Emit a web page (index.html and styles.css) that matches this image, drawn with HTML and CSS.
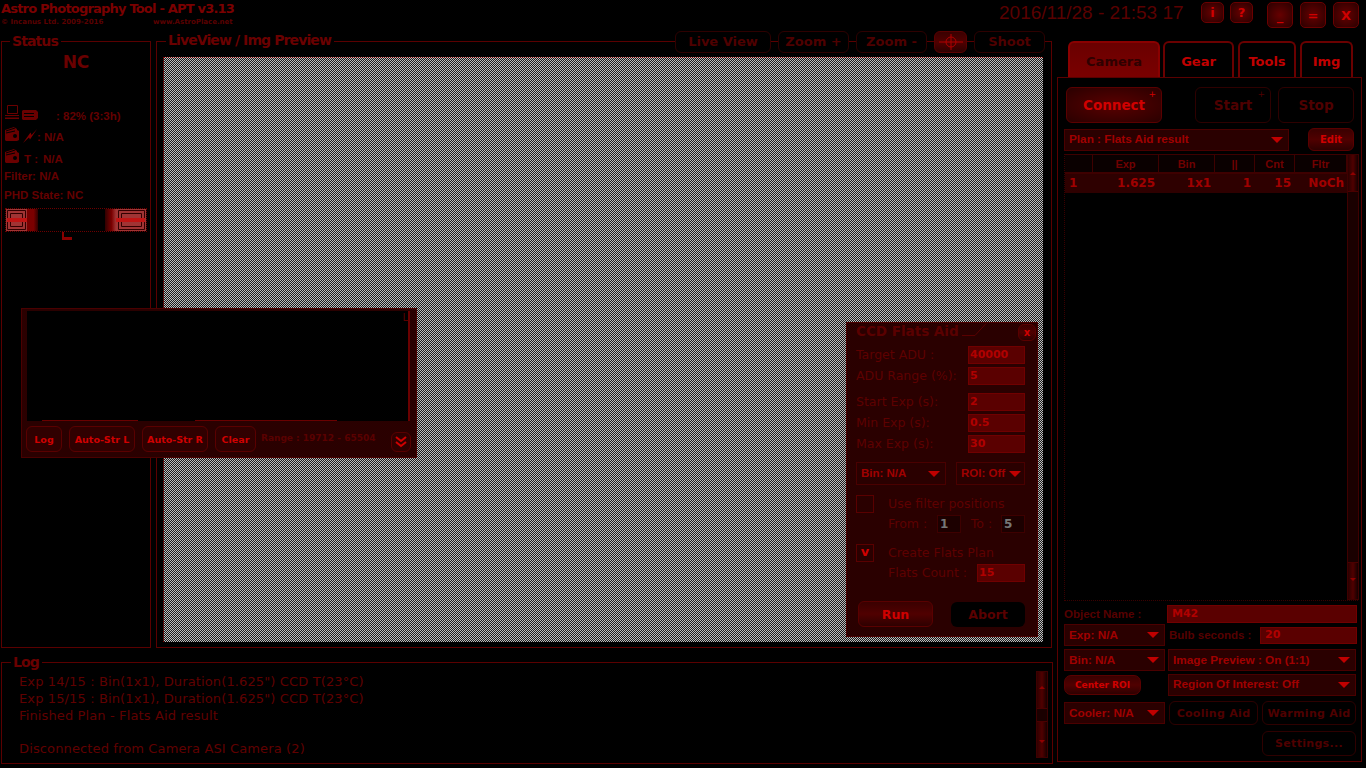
FILE: index.html
```html
<!DOCTYPE html>
<html lang="en">
<head>
<meta charset="utf-8">
<title>Astro Photography Tool</title>
<link rel="stylesheet" href="styles.css">
</head>
<body>
<div class="app">
  <header class="top">
    <div class="brand">
      <div class="brand-name">Astro Photography Tool - APT v3.13</div>
      <div class="brand-sub"><span class="brand-copy">© Incanus Ltd. 2009-2016</span><span>www.AstroPlace.net</span></div>
    </div>
    <div class="clock">2016/11/28 - 21:53 17</div>
    <button class="win-btn small">i</button>
    <button class="win-btn small">?</button>
    <button class="win-btn big first">_</button>
    <button class="win-btn big">=</button>
    <button class="win-btn big">X</button>
  </header>

  <div class="main">
    <div class="left">
      <div class="upper">
        <section class="panel status">
          <h2 class="panel-title">Status</h2>
          <div class="nc">NC</div>
          <div class="st-row r1">
            <svg class="ic" width="14" height="14" viewBox="0 0 14 14"><path d="M2.500 .5h10v8h-10z" fill="none" stroke="#6a0000"/><path d="M0 10h14v1H0zM0 12.500h14v1.500H0z" fill="#6a0000"/></svg>
            <svg class="ic batt" width="16" height="10" viewBox="0 0 16 10"><path d="M1 0h13l2 2v6l-2 2H1L0 9V1z" fill="#6a0000"/><path d="M2 3h10v1H2zM2 6h10v1H2z" fill="#000"/></svg>
            <span class="st-val batt-val">: 82% (3:3h)</span>
          </div>
          <div class="st-row r2">
            <svg class="ic" width="14" height="14" viewBox="0 0 14 14"><path d="M0 3l9-3 3 2v1l2 1v9l-2 1H1l-1-1z" fill="#6a0000"/><path d="M1 4l9-3M1 6l9-2" stroke="#000"/><circle cx="10" cy="9" r="2" fill="#000"/></svg>
            <svg class="ic bolt" width="14" height="14" viewBox="0 0 14 14"><path d="M14 0L8.500 6 7.500 3.500 0 14 6 8.500 7 10.500z" fill="#7a0000"/></svg>
            <span class="st-val">: N/A</span>
          </div>
          <div class="st-row r3">
            <svg class="ic" width="14" height="14" viewBox="0 0 14 14"><path d="M0 3l9-3 3 2v1l2 1v9l-2 1H1l-1-1z" fill="#6a0000"/><path d="M1 4l9-3M1 6l9-2" stroke="#000"/><circle cx="10" cy="9" r="2" fill="#000"/></svg>
            <span class="st-val t-lbl">T :</span>
            <span class="st-val t-val">N/A</span>
          </div>
          <div class="st-text filter">Filter: N/A</div>
          <div class="st-text phd">PHD State: NC</div>
          <div class="stretch">
            <svg class="knob" width="21" height="22" viewBox="0 0 21 22"><rect width="21" height="22" fill="#a03434"/><path d="M1.500 1.500h18v19h-18zM4.500 4.500h12v13h-12z" fill="none" stroke="#300"/><rect x="1" y="9" width="20" height="4" fill="#c01414"/></svg>
            <div class="fade-l"></div>
            <div class="stretch-gap"></div>
            <div class="fade-r"></div>
            <svg class="knob" width="30" height="22" viewBox="0 0 30 22"><rect width="30" height="22" fill="#a03434"/><path d="M2.500 1.500h26v19h-26zM5.500 4.500h20v13h-20z" fill="none" stroke="#300"/><rect x="0" y="9" width="29" height="4" fill="#c01414"/></svg>
          </div>
          <div class="stretch-mark"></div>
        </section>

        <section class="panel live">
          <div class="live-head">
            <h2 class="panel-title">LiveView / Img Preview</h2>
            <div class="live-tools">
              <button class="btn dim bold13 w96">Live View</button>
              <button class="btn dim bold13 w71">Zoom +</button>
              <button class="btn dim bold13 w71">Zoom -</button>
              <button class="btn lit w33"><svg width="24" height="16" viewBox="0 0 24 16"><circle cx="12" cy="8" r="5" fill="none" stroke="#b00000"/><path d="M0 8h24M12 0v16" stroke="#b00000"/></svg></button>
              <button class="btn dim bold13 w71">Shoot</button>
            </div>
          </div>
          <div class="preview">
            <svg class="preview-img" width="880" height="585" shape-rendering="crispEdges">
              <defs>
                <pattern id="chk" width="2" height="2" patternUnits="userSpaceOnUse">
                  <rect width="2" height="2" fill="#1c1c1c"/>
                  <rect width="1" height="1" fill="#bcbcbc"/>
                  <rect x="1" y="1" width="1" height="1" fill="#bcbcbc"/>
                </pattern>
              </defs>
              <rect width="880" height="585" fill="url(#chk)"/>
            </svg>
          </div>
        </section>
      </div>

      <section class="panel log">
        <h2 class="panel-title">Log</h2>
        <div class="log-body">
          <div class="log-lines">
            <div>Exp 14/15 : Bin(1x1), Duration(1.625") CCD T(23°C)</div>
            <div>Exp 15/15 : Bin(1x1), Duration(1.625") CCD T(23°C)</div>
            <div>Finished Plan - Flats Aid result</div>
            <div>&nbsp;</div>
            <div>Disconnected from Camera ASI Camera (2)</div>
          </div>
          <div class="log-scroll">
            <div class="log-sb up"></div>
            <div class="log-thumb"></div>
            <div class="log-sb down"></div>
          </div>
        </div>
      </section>
    </div>

    <aside class="right">
      <nav class="tabs">
        <div class="tab active w92">Camera</div>
        <div class="tab w71">Gear</div>
        <div class="tab w58">Tools</div>
        <div class="tab w53">Img</div>
      </nav>
      <div class="cam">
        <div class="cam-row acts">
          <button class="btn lit big-btn connect">Connect<span class="plus">+</span></button>
          <button class="btn dim big-btn start">Start<span class="plus">+</span></button>
          <button class="btn dim big-btn stop">Stop</button>
        </div>
        <div class="cam-row plan-row">
          <div class="drop plan">Plan : Flats Aid result</div>
          <button class="btn lit edit">Edit</button>
        </div>
        <div class="plan-table">
          <div class="pt-main">
            <div class="pt-grid pt-head"><span></span><span>Exp</span><span>Bin</span><span>||</span><span>Cnt</span><span>Fltr</span></div>
            <div class="pt-grid pt-line"><span class="idx">1</span><span>1.625</span><span>1x1</span><span>1</span><span>15</span><span>NoCh</span></div>
          </div>
          <div class="pt-scroll">
            <div class="pt-sb up"></div>
            <div class="pt-track"></div>
            <div class="pt-sb down"></div>
          </div>
        </div>
        <div class="cam-row obj-row">
          <span class="cam-lbl obj-lbl">Object Name :</span>
          <div class="input obj-in">M42</div>
        </div>
        <div class="cam-row exp-row">
          <div class="drop side">Exp: N/A</div>
          <span class="cam-lbl bulb-lbl">Bulb seconds :</span>
          <div class="input bulb-in">20</div>
        </div>
        <div class="cam-row bin-row">
          <div class="drop side">Bin: N/A</div>
          <div class="drop wide">Image Preview : On (1:1)</div>
        </div>
        <div class="cam-row roi-row">
          <button class="btn lit center-roi">Center ROI</button>
          <div class="drop wide region">Region Of Interest: Off</div>
        </div>
        <div class="cam-row cool-row">
          <div class="drop side">Cooler: N/A</div>
          <button class="btn dim aid cooling">Cooling Aid</button>
          <button class="btn dim aid warming">Warming Aid</button>
        </div>
        <div class="cam-row set-row">
          <button class="btn dim aid settings">Settings...</button>
        </div>
      </div>
    </aside>
  </div>

  <div class="float histo">
    <div class="histo-view">
      <span class="histo-l">L</span>
      <span class="histo-bar b1"></span>
      <span class="histo-bar b2"></span>
    </div>
    <div class="histo-tools">
      <button class="btn lit hb w36">Log</button>
      <button class="btn lit hb w66">Auto-Str L</button>
      <button class="btn lit hb w66">Auto-Str R</button>
      <button class="btn lit hb w41">Clear</button>
      <span class="range">Range : 19712 - 65504</span>
      <button class="btn lit chev"><svg width="12" height="12" viewBox="0 0 12 12"><path d="M1 1l5 4 5-4M1 6l5 4 5-4" fill="none" stroke="#d00000" stroke-width="2"/></svg></button>
    </div>
  </div>

  <div class="float flats">
    <div class="fl-title">
      <span class="fl-name">CCD Flats Aid</span>
      <svg class="fl-slash" width="25" height="13" viewBox="0 0 25 13"><path d="M0 12.500h13L24 .5" fill="none" stroke="#5a0000"/></svg>
      <button class="btn lit fl-x">x</button>
    </div>
    <div class="fl-row"><span class="fl-lbl">Target ADU :</span><div class="input fl-in">40000</div></div>
    <div class="fl-row gap8"><span class="fl-lbl">ADU Range (%):</span><div class="input fl-in">5</div></div>
    <div class="fl-row"><span class="fl-lbl">Start Exp (s):</span><div class="input fl-in">2</div></div>
    <div class="fl-row"><span class="fl-lbl">Min Exp (s):</span><div class="input fl-in">0.5</div></div>
    <div class="fl-row gap9"><span class="fl-lbl">Max Exp (s):</span><div class="input fl-in">30</div></div>
    <div class="fl-drops">
      <div class="drop fl-bin">Bin: N/A</div>
      <div class="drop fl-roi">ROI: Off</div>
    </div>
    <div class="fl-check"><span class="box"></span><span class="fl-lbl">Use filter positions</span></div>
    <div class="fl-sub range-row">
      <span class="fl-lbl from-lbl">From :</span><div class="mini one">1</div>
      <span class="fl-lbl to-lbl">To :</span><div class="mini">5</div>
    </div>
    <div class="fl-check plan-check"><span class="box on">v</span><span class="fl-lbl">Create Flats Plan</span></div>
    <div class="fl-sub count-row"><span class="fl-lbl">Flats Count :</span><div class="input fl-count">15</div></div>
    <div class="fl-actions">
      <button class="btn lit run">Run</button>
      <button class="btn abort">Abort</button>
    </div>
  </div>
</div>
</body>
</html>
```
FILE: styles.css
```css
* { box-sizing: border-box; }
html, body { margin: 0; padding: 0; background: #000; }
body { width: 1366px; height: 768px; overflow: hidden; font-family: "DejaVu Sans", sans-serif; color: #6a0000; }
h2 { margin: 0; }
.app { position: relative; width: 1366px; height: 768px; display: flex; flex-direction: column; }

/* header */
.top { height: 41px; display: flex; align-items: flex-start; padding-left: 1px; }
.brand { width: 998px; padding-top: 1px; }
.brand-name { font: bold 13px/15px "DejaVu Sans", sans-serif; letter-spacing: -.8px; color: #7a0000; white-space: nowrap; }
.brand-sub { font: bold 7px/10px "DejaVu Sans", sans-serif; color: #5a0000; white-space: nowrap; display: flex; margin-top: 1px; }
.brand-copy { width: 152px; }
.clock { font: 19px/24px "Liberation Sans", sans-serif; color: #5a0000; width: 186px; margin: 0 16px 0 0; padding-top: 1px; white-space: nowrap; }
.win-btn { border: 1px solid #6a0000; border-radius: 5px; color: #d00000; font: bold 13px "DejaVu Sans", sans-serif; padding: 0; background: radial-gradient(ellipse at center, #660000, #2a0000); margin-top: 2px; }
.win-btn.small { width: 23px; height: 21px; margin-right: 6px; }
.win-btn.big { width: 26px; height: 26px; margin-right: 7px; }
.win-btn.first { margin-left: 8px; }

/* layout */
.main { display: flex; flex: 1; min-height: 0; }
.left { width: 1052px; margin-left: 1px; margin-right: 4px; display: flex; flex-direction: column; flex: none; }
.upper { display: flex; gap: 5px; height: 607px; }
.panel { border: 1px solid #5a0000; }
.panel-title { font: bold 14px/18px "DejaVu Sans", sans-serif; letter-spacing: -.9px; color: #6a0000; background: #000; width: fit-content; padding: 0 3px 0 2px; margin: -10px 0 0 5px; white-space: nowrap; }

/* status */
.status { width: 150px; padding-left: 3px; font: bold 11.500px/16px "Liberation Sans", sans-serif; color: #640000; }
.nc { font: bold 17px/20px "DejaVu Sans", sans-serif; color: #6a0000; text-align: center; margin: 2px 0 0 -3px; }
.st-row { display: flex; align-items: center; height: 14px; }
.r1 { margin-top: 33px; }
.r2, .r3 { margin-top: 8px; }
.ic { flex: none; }
.batt { margin: 5px 0 0 3px; }
.bolt { margin: 3px 0 0 4px; }
.st-val { white-space: nowrap; font: bold 11.500px/16px "Liberation Sans", sans-serif; }
.batt-val { margin: 7px 0 0 18px; }
.r2 .st-val, .r3 .st-val { margin-top: 5px; }
.t-lbl { margin-left: 5px; }
.t-val { margin-left: 5px; }
.st-text { white-space: nowrap; margin-left: -1px; }
.filter { margin-top: 5px; }
.phd { margin-top: 3px; }
.stretch { display: flex; width: 142px; height: 24px; border: 1px dotted #6a0000; margin-top: 5px; }
.knob { flex: none; }
.fade-l { width: 11px; background: linear-gradient(90deg, #7a0000, #7a0000 60%, #300000); }
.stretch-gap { flex: 1; }
.fade-r { width: 11px; background: linear-gradient(90deg, #300000, #7a0000 60%, #a03434); }
.stretch-mark { width: 10px; height: 8px; margin-left: 57px; border-left: 2px solid #8a0000; border-bottom: 3px solid #8a0000; }

/* live */
.live { width: 896px; padding: 0 7px 0 6px; }
.live-head { display: flex; justify-content: space-between; align-items: flex-start; height: 26px; margin-top: -11px; }
.live-head .panel-title { margin: 0 0 0 3px; }
.live-tools { display: flex; gap: 7px; margin-right: -1px; }
.preview { position: relative; width: 880px; height: 585px; }
.preview::after { content: ""; position: absolute; inset: 0; border-top: 1px dotted #8a0000; border-left: 1px dotted #8a0000; }
.preview-img { display: block; }

/* buttons */
.btn { font-family: "DejaVu Sans", sans-serif; padding: 0; white-space: nowrap; border-radius: 6px; position: relative; }
.btn.dim { background: #000; border: 1px solid #2e0000; color: #4f0000; font-weight: bold; }
.btn.lit { background: linear-gradient(180deg, #3a0000, #500000 50%, #2e0000); border: 1px solid #5a0000; color: #d00000; font-weight: bold; }
.bold13 { font-size: 13px; }
.live-tools .btn { height: 22px; padding-bottom: 2px; }
.live-tools .w33 { padding-bottom: 0; }
.w96 { width: 96px; }
.w71 { width: 71px; }
.w33 { width: 33px; display: flex; align-items: center; justify-content: center; }

/* log */
.log { margin-top: 14px; height: 102px; }
.log .panel-title { margin-left: 9px; }
.log-body { display: flex; justify-content: space-between; padding: 0 4px 0 17px; }
.log-lines { font: 13px/16.800px "DejaVu Sans", sans-serif; letter-spacing: .13px; color: #600000; white-space: nowrap; margin-top: 3px; }
.log-scroll { width: 12px; height: 87px; display: flex; flex-direction: column; border: 1px solid #3e0000; }
.log-sb { flex: 1; position: relative; background: linear-gradient(90deg, #300000, #500000 50%, #180000); }
.log-sb::after { content: ""; position: absolute; left: 2px; border-left: 3px solid transparent; border-right: 3px solid transparent; }
.log-sb.up::after { top: 14px; border-bottom: 3px solid #900000; }
.log-sb.down::after { bottom: 14px; border-top: 3px solid #900000; }
.log-thumb { height: 14px; background: #1a0000; border-top: 1px solid #4a0000; border-bottom: 1px solid #4a0000; }

/* right */
.right { width: 305px; flex: none; display: flex; flex-direction: column; }
.tabs { display: flex; height: 36px; padding-left: 11px; gap: 3px; }
.tab { border: 2px solid #6a0000; border-bottom: 0; border-radius: 6px 6px 0 0; color: #c00000; font: bold 13px/38px "DejaVu Sans", sans-serif; text-align: center; }
.tab.active { background: linear-gradient(180deg, #6a0000, #7a0000); color: #2e0000; border-color: #8a0000; }
.w92 { width: 92px; }
.w58 { width: 58px; margin-left: 1px; margin-right: 1px; }
.w53 { width: 53px; }
.cam { height: 685px; border: 1px solid #5a0000; padding: 9px 0 0 6px; }
.cam-row { display: flex; align-items: center; }
.big-btn { height: 36px; font-size: 13.500px; }
.connect { width: 96px; margin-left: 2px; background: radial-gradient(ellipse at center, #5a0000, #2a0000) !important; }
.start { width: 76px; margin-left: 33px; }
.stop { width: 76px; margin-left: 7px; }
.plus { position: absolute; top: 1px; right: 5px; font-size: 9px; font-weight: normal; }
.plan-row { margin-top: 5px; height: 23px; }
.drop { position: relative; height: 22px; background: #2a0000; border: 1px solid #4a0000; font: bold 11.750px/19px "Liberation Sans", sans-serif; color: #a00000; padding-left: 4px; white-space: nowrap; }
.drop::after { content: ""; position: absolute; right: 5px; top: 7px; border-left: 6px solid transparent; border-right: 6px solid transparent; border-top: 6px solid #c00000; }
.plan { width: 225px; line-height: 18px; }
.edit { width: 46px; height: 23px; margin-left: 19px; font-size: 10px; }
.plan-table { display: flex; width: 294px; height: 447px; margin-top: 3px; border-bottom: 1px dotted #3a0000; border-left: 1px dotted #3a0000; }
.pt-main { flex: 1; }
.pt-grid { display: grid; grid-template-columns: 28px 66px 56px 40px 40px 51px; }
.pt-head { height: 20px; border: 1px solid #3e0000; border-bottom: 2px solid #3e0000; border-left: 0; font: bold 11px/18px "Liberation Sans", sans-serif; color: #700000; text-align: center; background: #0a0000; }
.pt-head span { border-right: 1px solid #3e0000; }
.pt-head span:last-child { border-right: 0; }
.pt-line { height: 19px; background: #2e0000; font: bold 12px/19px "DejaVu Sans", sans-serif; color: #a00000; text-align: right; }
.pt-line span { padding-right: 4px; }
.pt-line span:last-child { padding-right: 2px; }
.pt-line .idx { text-align: left; padding-left: 4px; }
.pt-scroll { width: 12px; flex: none; display: flex; flex-direction: column; border: 1px solid #3e0000; }
.pt-sb { position: relative; height: 36px; background: linear-gradient(90deg, #2a0000, #500000 50%, #140000); }
.pt-sb::after { content: ""; position: absolute; left: 2px; border-left: 3px solid transparent; border-right: 3px solid transparent; }
.pt-sb.up::after { top: 17px; border-bottom: 3px solid #900000; }
.pt-sb.down::after { top: 15px; border-top: 3px solid #900000; }
.pt-track { flex: 1; background: #1a0000; border-top: 1px solid #4a0000; border-bottom: 1px solid #4a0000; }
.input { background: #5a0000; height: 18px; border: 1px solid #700000; color: #b00000; font: bold 11px/15px "DejaVu Sans", sans-serif; padding-left: 1px; white-space: nowrap; }
.cam-lbl { font: bold 11.500px/14px "Liberation Sans", sans-serif; color: #560000; white-space: nowrap; }
.obj-row { margin-top: 4px; height: 18px; }
.obj-lbl { width: 103px; }
.obj-in { width: 190px; padding-left: 4px; }
.exp-row { margin-top: 1px; }
.side { width: 101px; }
.bulb-lbl { width: 91px; margin-left: 4px; }
.bulb-in { width: 97px; height: 17px; line-height: 14px; padding-left: 4px; }
.bin-row { margin-top: 3px; }
.wide { width: 188px; margin-left: 3px; }
.region { line-height: 17px; }
.roi-row { margin-top: 3px; }
.center-roi { width: 77px; height: 20px; font-size: 9px; margin-right: 24px; border-radius: 7px; }
.cool-row { margin-top: 5px; }
.aid { font-size: 11px; height: 24px; letter-spacing: .3px; }
.cooling { width: 89px; margin-left: 4px; }
.warming { width: 94px; margin-left: 4px; }
.set-row { margin-top: 6px; }
.settings { width: 94px; height: 25px; margin-left: 198px; }

/* floats */
.float { position: absolute; background: #2a0000; border: 1px solid #4a0000; }
.histo { left: 21px; top: 308px; width: 396px; height: 150px; padding: 2px 0 0 5px; }
.histo-view { position: relative; width: 383px; height: 110px; background: #000; border-right: 2px solid #6a0000; }
.histo-l { position: absolute; right: 0; top: 2px; font: 10px/10px "DejaVu Sans", sans-serif; color: #5a0000; }
.histo-bar { position: absolute; bottom: 0; height: 1px; background: #6a0000; }
.b1 { left: 15px; width: 96px; }
.b2 { left: 168px; width: 142px; }
.histo-tools { display: flex; align-items: center; gap: 7px; margin: 4px 0 0 -1px; height: 28px; }
.histo .btn.lit { background: #300000; }
.hb { height: 26px; font-size: 9.500px; }
.w36 { width: 36px; }
.w66 { width: 66px; }
.w41 { width: 41px; margin-right: -2px; }
.range { font: bold 9px/12px "DejaVu Sans", sans-serif; color: #5a0000; white-space: nowrap; width: 123px; margin-top: -2px; }
.chev { width: 20px; height: 20px; margin-top: 5px; display: flex; align-items: center; justify-content: center; }

.flats { left: 846px; top: 322px; width: 192px; height: 315px; padding: 0 12px 0 9px; }
.fl-title { position: relative; display: flex; align-items: flex-start; height: 23px; }
.fl-name { font: bold 13.500px/16px "DejaVu Sans", sans-serif; color: #5a0000; white-space: nowrap; }
.fl-slash { margin-left: 3px; }
.fl-x { position: absolute; right: -11px; top: 1px; width: 18px; height: 17px; font-size: 10px; line-height: 13px; }
.fl-row { display: flex; justify-content: space-between; align-items: center; margin-bottom: 3px; }
.gap8 { margin-bottom: 8px; }
.gap9 { margin-bottom: 9px; }
.fl-lbl { font: 12.500px/16px "DejaVu Sans", sans-serif; color: #5e0000; white-space: nowrap; }
.fl-in { width: 57px; }
.fl-drops { display: flex; justify-content: space-between; }
.flats .drop { font-size: 11.500px; }
.fl-bin { width: 90px; height: 23px; line-height: 21px; }
.fl-roi { width: 69px; height: 23px; line-height: 21px; }
.fl-bin::after { top: 8px; }
.fl-roi::after { top: 8px; right: 3px; }
.fl-check { display: flex; align-items: center; height: 18px; margin-top: 10px; gap: 14px; }
.plan-check { margin-top: 11px; }
.box { width: 18px; height: 18px; border: 1px solid #5a0000; flex: none; color: #d00000; font: bold 13px/14px "DejaVu Sans", sans-serif; text-align: center; }
.fl-sub { display: flex; align-items: center; height: 18px; margin: 2px 0 0 32px; }
.from-lbl { width: 49px; }
.mini { width: 24px; height: 18px; background: #1c0000; border: 1px solid #3e0000; color: #777; font: bold 12px/16px "DejaVu Sans", sans-serif; padding-left: 2px; }
.to-lbl { width: 39px; margin-left: 1px; text-align: center; }
.count-row { justify-content: space-between; }
.fl-count { width: 48px; }
.fl-actions { display: flex; justify-content: space-between; margin: 19px 0 0 2px; }
.run { width: 75px; height: 26px; font-size: 12.500px; }
.abort { width: 74px; height: 25px; margin-top: 1px; background: #000; border: 0; color: #5a0000; font-weight: bold; font-size: 12.500px; }
```
